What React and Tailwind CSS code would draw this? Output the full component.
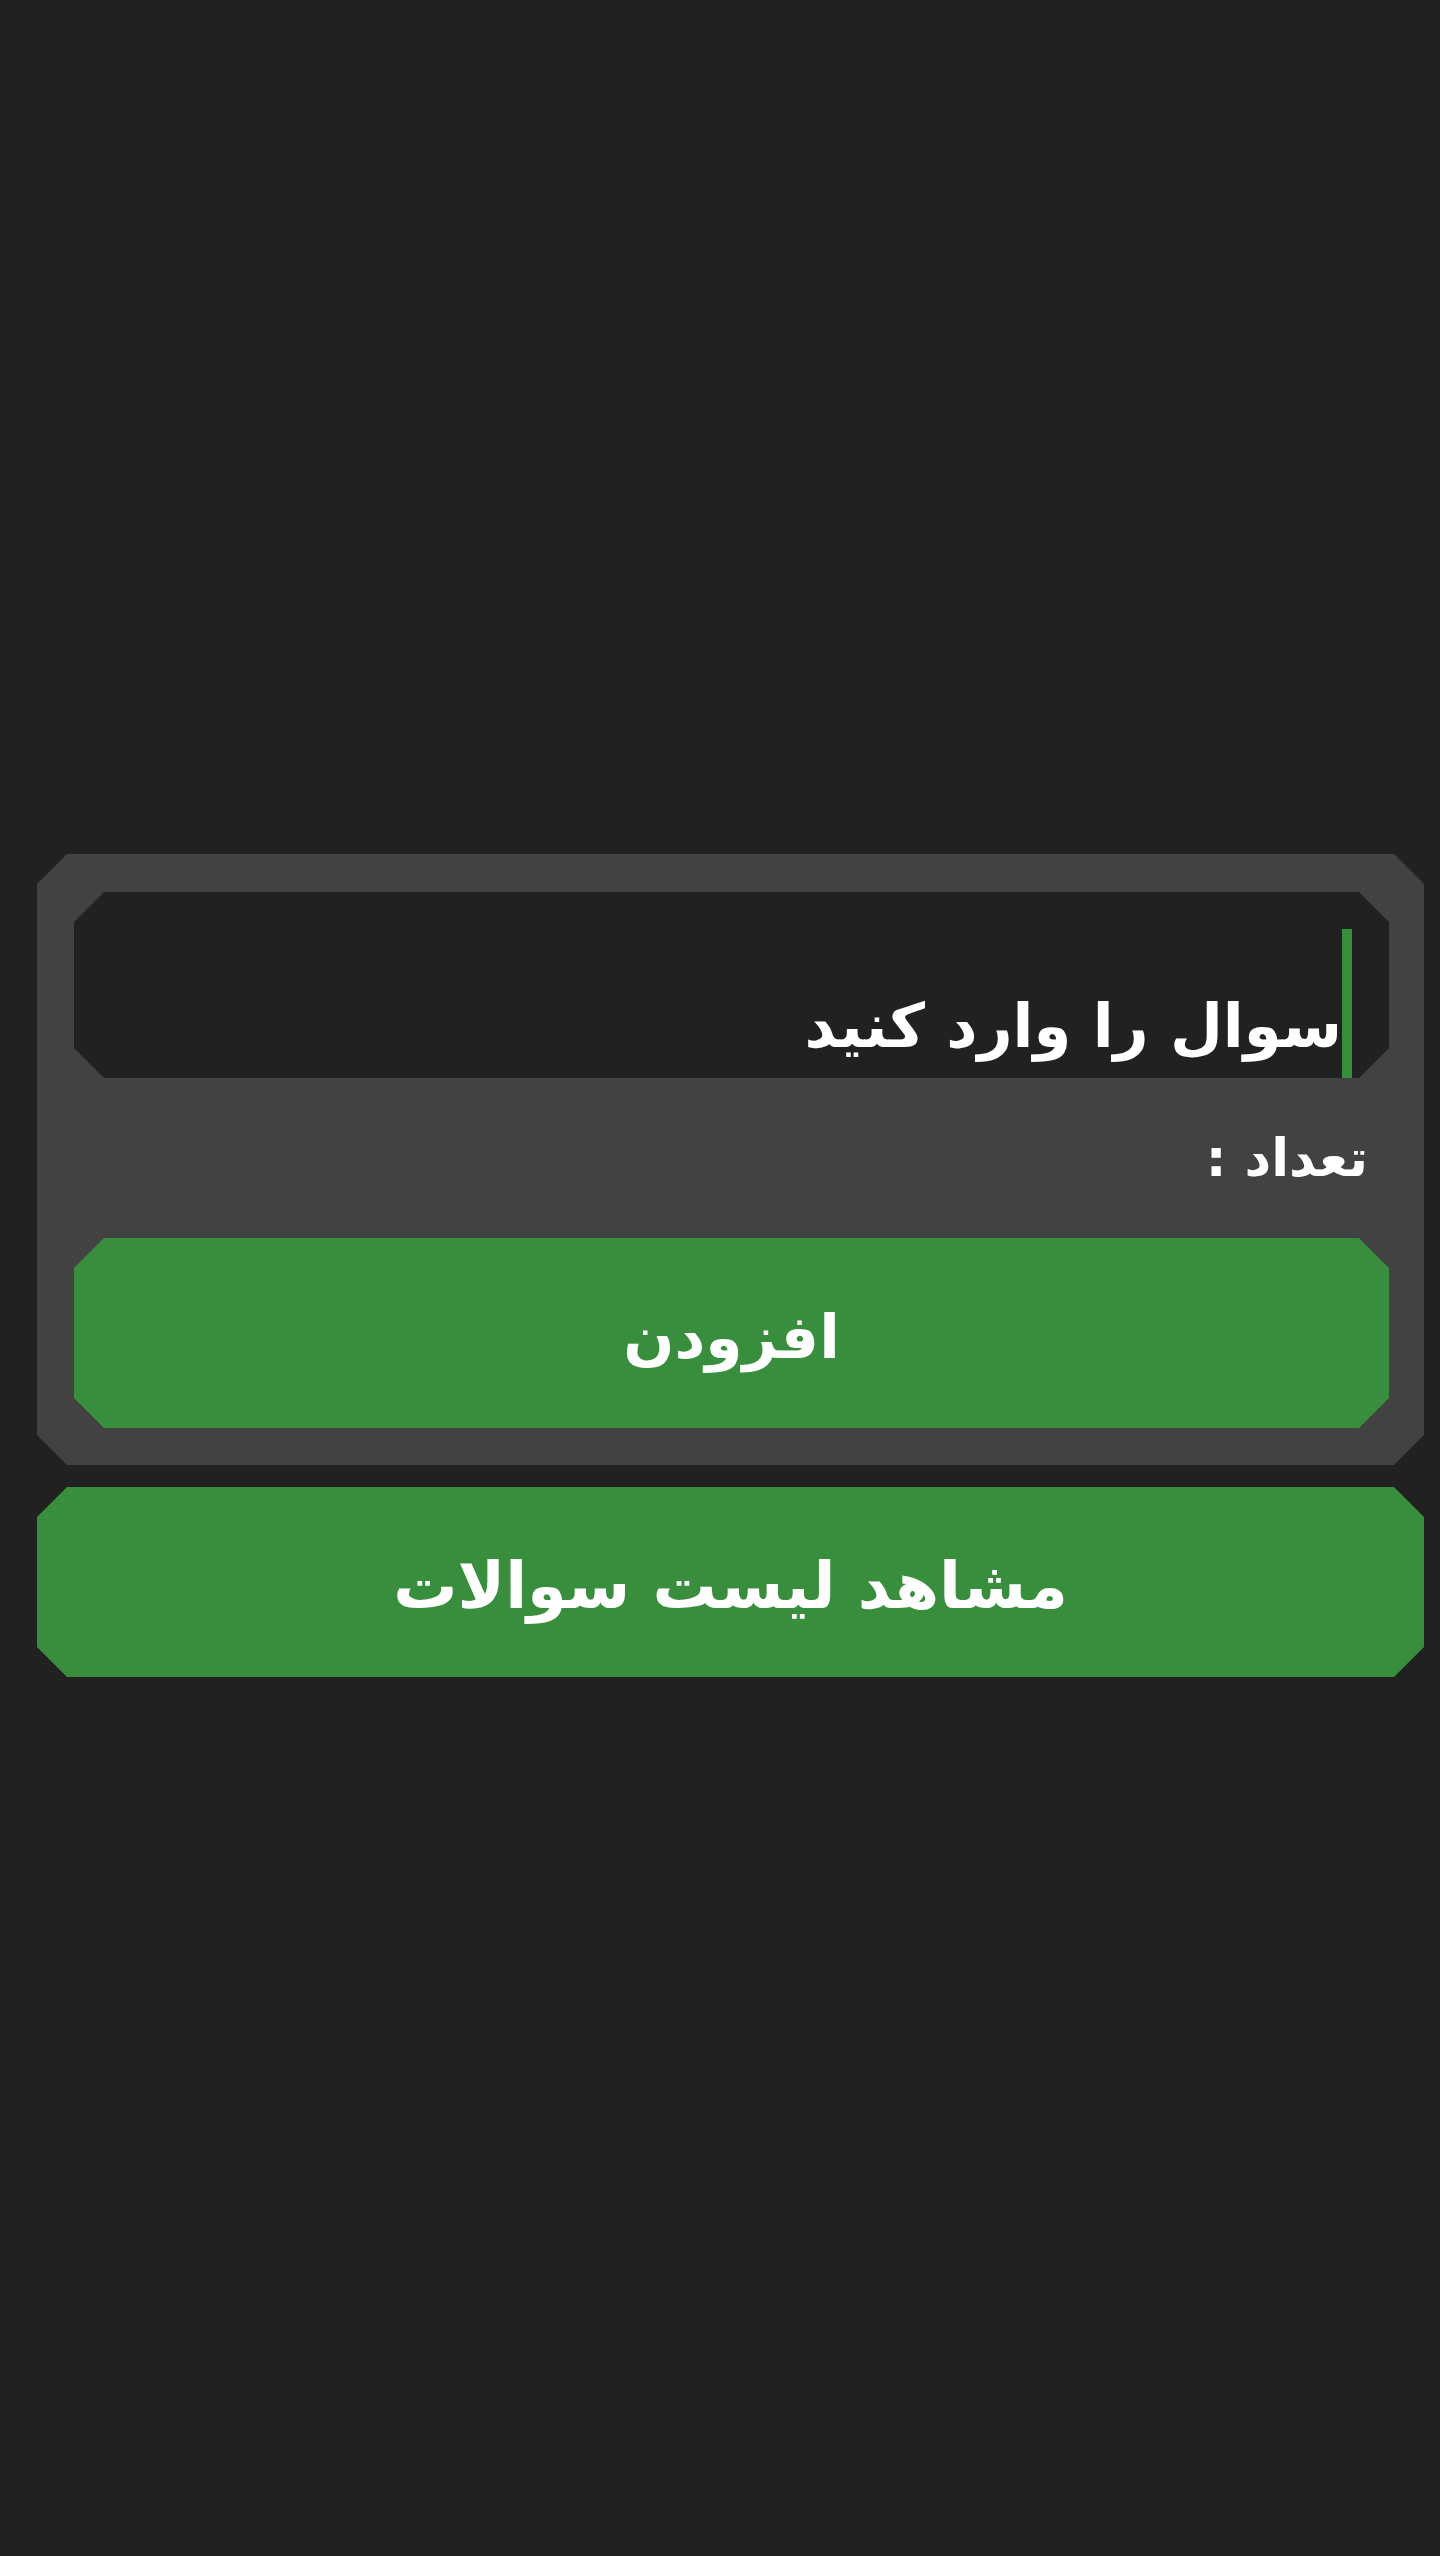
import React from "react";

const chamfer =
  "[clip-path:polygon(30px_0,calc(100%_-_30px)_0,100%_30px,100%_calc(100%_-_30px),calc(100%_-_30px)_100%,30px_100%,0_calc(100%_-_30px),0_30px)]";

export default function App() {
  return (
    <div
      dir="rtl"
      className="min-h-screen bg-[#212121] flex flex-col justify-center pb-[25px] pl-[37px] pr-[16px] text-white font-bold"
      style={{ fontFamily: '"DejaVu Sans", "Noto Sans", sans-serif' }}
    >
      {/* Form card */}
      <div className={`bg-[#424242] pt-[38px] pb-[37px] pl-[37px] pr-[35px] ${chamfer}`}>
        <div className={`h-[186px] bg-[#212121] flex items-stretch pt-[37px] pr-[37px] ${chamfer}`}>
          <div className="w-[10px] bg-[#388e3c]" />
          <div className="flex items-end pb-[22px] text-[61px] leading-none">سوال را وارد کنید</div>
        </div>

        <div className="h-[160px] flex items-center pr-[21px] text-[52px] leading-none">
          تعداد :
        </div>

        <button className={`w-full h-[190px] pt-[8px] bg-[#388e3c] text-white font-bold text-[60px] leading-none ${chamfer}`}>
          افزودن
        </button>
      </div>

      <button className={`mt-[22px] w-full h-[190px] pt-[8px] bg-[#388e3c] text-white font-bold text-[64px] leading-none ${chamfer}`}>
        مشاهد لیست سوالات
      </button>
    </div>
  );
}
